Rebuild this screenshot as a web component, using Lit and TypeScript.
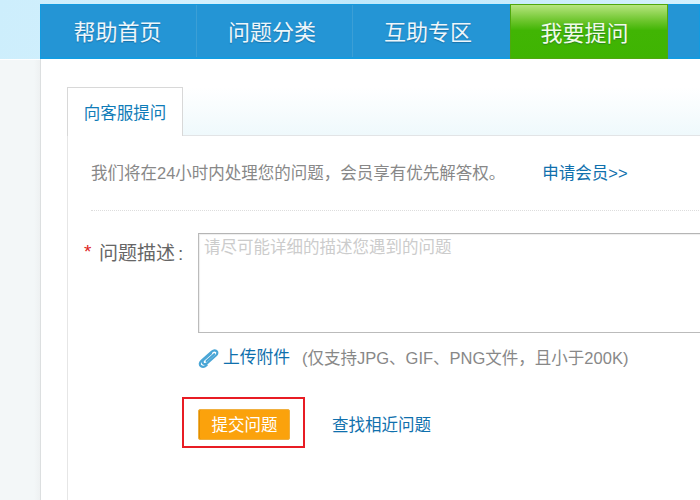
import { LitElement, html, css } from "lit";
import { customElement } from "lit/decorators.js";

@customElement("app-root")
export class AppRoot extends LitElement {
  static styles = css`
    :host { display: block; width: 700px; height: 500px; overflow: hidden; background: linear-gradient(#fff 60px, transparent 60px), linear-gradient(90deg, #f3f7f8 34px, #eef1f2 40px);
      font-family: "Liberation Sans", "Noto Sans CJK SC", sans-serif; }
    .top { height: 59px; background: linear-gradient(100deg, #cdeefc 0, #d4f0fd 30%, #bfe8fb 50%, #d4f1fd 100%); padding: 4px 0 0 40px; box-sizing: border-box; }
    .nav { display: flex; height: 55px; width: 660px; box-sizing: border-box; background: #2495d5; border: 1px solid #139be0; border-bottom-width: 2px; }
    .item { width: 156px; flex: none; box-sizing: border-box; display: flex; align-items: center; justify-content: center; color: #eef6fb; font-size: 22px; padding: 0 5px 2px 0; border-right: 1px solid #3b9fd6; text-shadow: 0 1px 1px rgba(0,50,90,.35); }
    .item.first { padding-right: 2px; }
    .item.last { border-right: none; width: 157px; padding-right: 7px; }
    .item.active { width: 158px; margin: -1px 0 -2px 0; height: 55px; padding-right: 9px; color: #f2fbe8; border: 1px solid #4fa80e; background: linear-gradient(#b7e57f 0, #6cc52c 30%, #41b504 48%, #3fb402 100%); }
    .main { margin-left: 40px; height: 441px; background: #fff; border-left: 1px solid #dcdfe0; padding: 28px 0 0 26px; box-sizing: border-box; }
    .tabs { display: flex; height: 49px; width: 640px; box-sizing: border-box; background: linear-gradient(#fff, #eff9fc); border-bottom: 1px solid #e2e4e6; }
    .tab { width: 116px; height: 49px; box-sizing: border-box; border: 1px solid #d8d8d8; border-bottom: none; background: #fff; color: #0f7cb8; font-size: 16.5px; display: flex; align-items: center; justify-content: center; padding-bottom: 1px; }
    .panel { border-left: 1px solid #e6e6e6; height: 365px; padding: 0 0 0 23px; width: 640px; box-sizing: border-box; }
    .notice { height: 75px; width: 640px; box-sizing: border-box; display: flex; align-items: center; gap: 37px; font-size: 16.5px; color: #888; border-bottom: 1px dotted #ddd; padding-bottom: 2px; }
    .link { color: #0f70ad; white-space: nowrap; }
    .form { display: grid; grid-template-columns: 107px 1fr; width: 640px; padding-top: 22px; }
    .label { font-size: 19px; color: #666; padding-top: 5px; white-space: nowrap; display: flex; gap: 8px; margin-left: -7px; }
    .label i { font-style: normal; margin-left: 3px; }
    .star { color: #d22; font-size: 19px; width: 7px; padding-top: 3px; }
    .ta { width: 560px; height: 100px; box-sizing: border-box; border: 1px solid #bbb; border-top-color: #b5b5b5; box-shadow: inset 1px 1px 1px #eee; color: #ccc; font-size: 16.5px; padding: 2px 5px; line-height: 23px; }
    .upload { grid-column: 2; display: flex; align-items: center; height: 48px; font-size: 16.5px; color: #888; white-space: nowrap; }
    .upload svg { width: 21px; height: 19px; flex: none; margin: 2px 4px 0 0; }
    .upload .link { margin-right: 12px; margin-top: -2px; font-size: 16.75px; }
    .actions { grid-column: 2; display: flex; align-items: center; gap: 27px; margin-top: 16px; }
    .actions .link { font-size: 16.5px; margin-top: 3px; }
    .frame { margin-left: -16px; width: 123px; height: 51px; box-sizing: border-box; border: 2px solid #e81c24; display: flex; align-items: flex-start; padding: 10px 14px 0; }
    .btn { width: 92px; height: 31px; flex: none; box-sizing: border-box; background: #fba20c; border: 1px solid #f0b040; border-radius: 2px; color: #fff; font-size: 16.5px; display: flex; align-items: center; justify-content: center; padding-left: 1px; padding-bottom: 2px; box-shadow: inset 1px 0 0 #e08e00; }
  `;

  render() {
    return html`
      <div class="top">
        <nav class="nav">
          <div class="item first">帮助首页</div>
          <div class="item">问题分类</div>
          <div class="item last">互助专区</div>
          <div class="item active">我要提问</div>
        </nav>
      </div>
      <div class="main">
        <div class="tabs"><div class="tab">向客服提问</div></div>
        <div class="panel">
          <div class="notice"><span>我们将在24小时内处理您的问题，会员享有优先解答权。</span><span class="link">申请会员&gt;&gt;</span></div>
          <div class="form">
            <div class="label"><span class="star">*</span><span>问题描述<i>:</i></span></div>
            <div class="ta">请尽可能详细的描述您遇到的问题</div>
            <div class="upload">
              <svg viewBox="0 0 21 19" fill="none" stroke="#4aa6d6" stroke-width="2.2" stroke-linecap="round" stroke-linejoin="round">
                <path d="M13 4.5 L5.5 11 C4.2 12.2 4.4 13.8 5.4 14.6 C6.6 15.5 8 15.2 9.2 14.2 L18.2 6.2 C19.8 4.6 19.6 2.8 18.4 2 C17 1 15.2 1.4 13.8 2.6 L3.4 11.8 C1.4 13.6 1.4 16 2.8 17 C4.4 18.2 6.8 17.8 8.6 16.2" />
                <path d="M16.2 5.2 L8.6 12" />
              </svg>
              <span class="link">上传附件</span>
              <span>(仅支持JPG、GIF、PNG文件，且小于200K)</span>
            </div>
            <div class="actions">
              <div class="frame"><div class="btn">提交问题</div></div>
              <span class="link">查找相近问题</span>
            </div>
          </div>
        </div>
      </div>
    `;
  }
}
